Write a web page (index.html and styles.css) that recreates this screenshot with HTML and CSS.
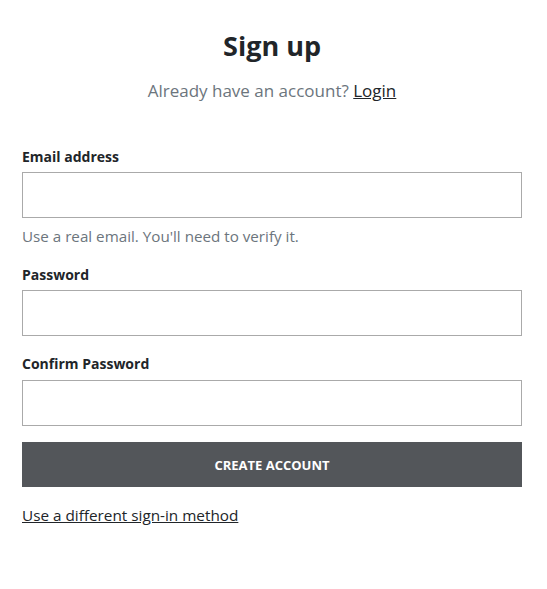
FILE: index.html
```html
<!DOCTYPE html>
<html lang="en">
<head>
<meta charset="utf-8">
<title>Sign up</title>
<link rel="stylesheet" href="styles.css">
</head>
<body>
<main class="page">
  <h1 class="title">Sign up</h1>
  <p class="subtitle">Already have an account? <a href="#" class="link">Login</a></p>
  <form class="form">
    <div class="field">
      <label class="label" for="email">Email address</label>
      <input class="input" id="email" type="email">
      <div class="help">Use a real email. You'll need to verify it.</div>
    </div>
    <div class="field">
      <label class="label" for="pw">Password</label>
      <input class="input" id="pw" type="password">
    </div>
    <div class="field field-last">
      <label class="label" for="pw2">Confirm Password</label>
      <input class="input" id="pw2" type="password">
    </div>
    <button class="btn" type="button">CREATE ACCOUNT</button>
  </form>
  <a href="#" class="alt link">Use a different sign-in method</a>
</main>
</body>
</html>
```
FILE: styles.css
```css
* { box-sizing: border-box; }
html, body { margin: 0; background: #fff; }
body {
  font-family: "Open Sans", "Noto Sans", sans-serif;
  color: #212529;
}
.page {
  width: 500px;
  margin: 0 0 0 22px;
  padding-top: 28px;
}
.title {
  margin: 0;
  text-align: center;
  font-size: 27px;
  font-weight: 700;
  line-height: 36px;
  color: #212529;
}
.subtitle {
  margin: 14px 0 0;
  text-align: center;
  font-size: 17px;
  line-height: 26px;
  color: #6c757d;
}
.link { color: #212529; text-decoration: underline; }
.form { margin-top: 43px; display: flex; flex-direction: column; }
.field { display: flex; flex-direction: column; margin-bottom: 18px; }
.label {
  font-size: 14px;
  font-weight: 700;
  line-height: 20px;
  margin-bottom: 5px;
}
.field-last { margin-bottom: 16px; }
.field-last .label { margin-bottom: 6px; }
.input {
  width: 100%;
  height: 46px;
  border: 1px solid #aaa;
  border-radius: 0;
  padding: 6px 12px;
  font: inherit;
}
.help {
  margin-top: 7px;
  font-size: 15.2px;
  line-height: 22px;
  color: #6c757d;
}
.btn {
  height: 45px;
  border: 0;
  background: #53565a;
  color: #fff;
  font-family: inherit;
  font-size: 13px;
  font-weight: 700;
  cursor: pointer;
}
.alt {
  display: inline-block;
  margin-top: 17px;
  font-size: 15.3px;
  line-height: 22px;
}
```
